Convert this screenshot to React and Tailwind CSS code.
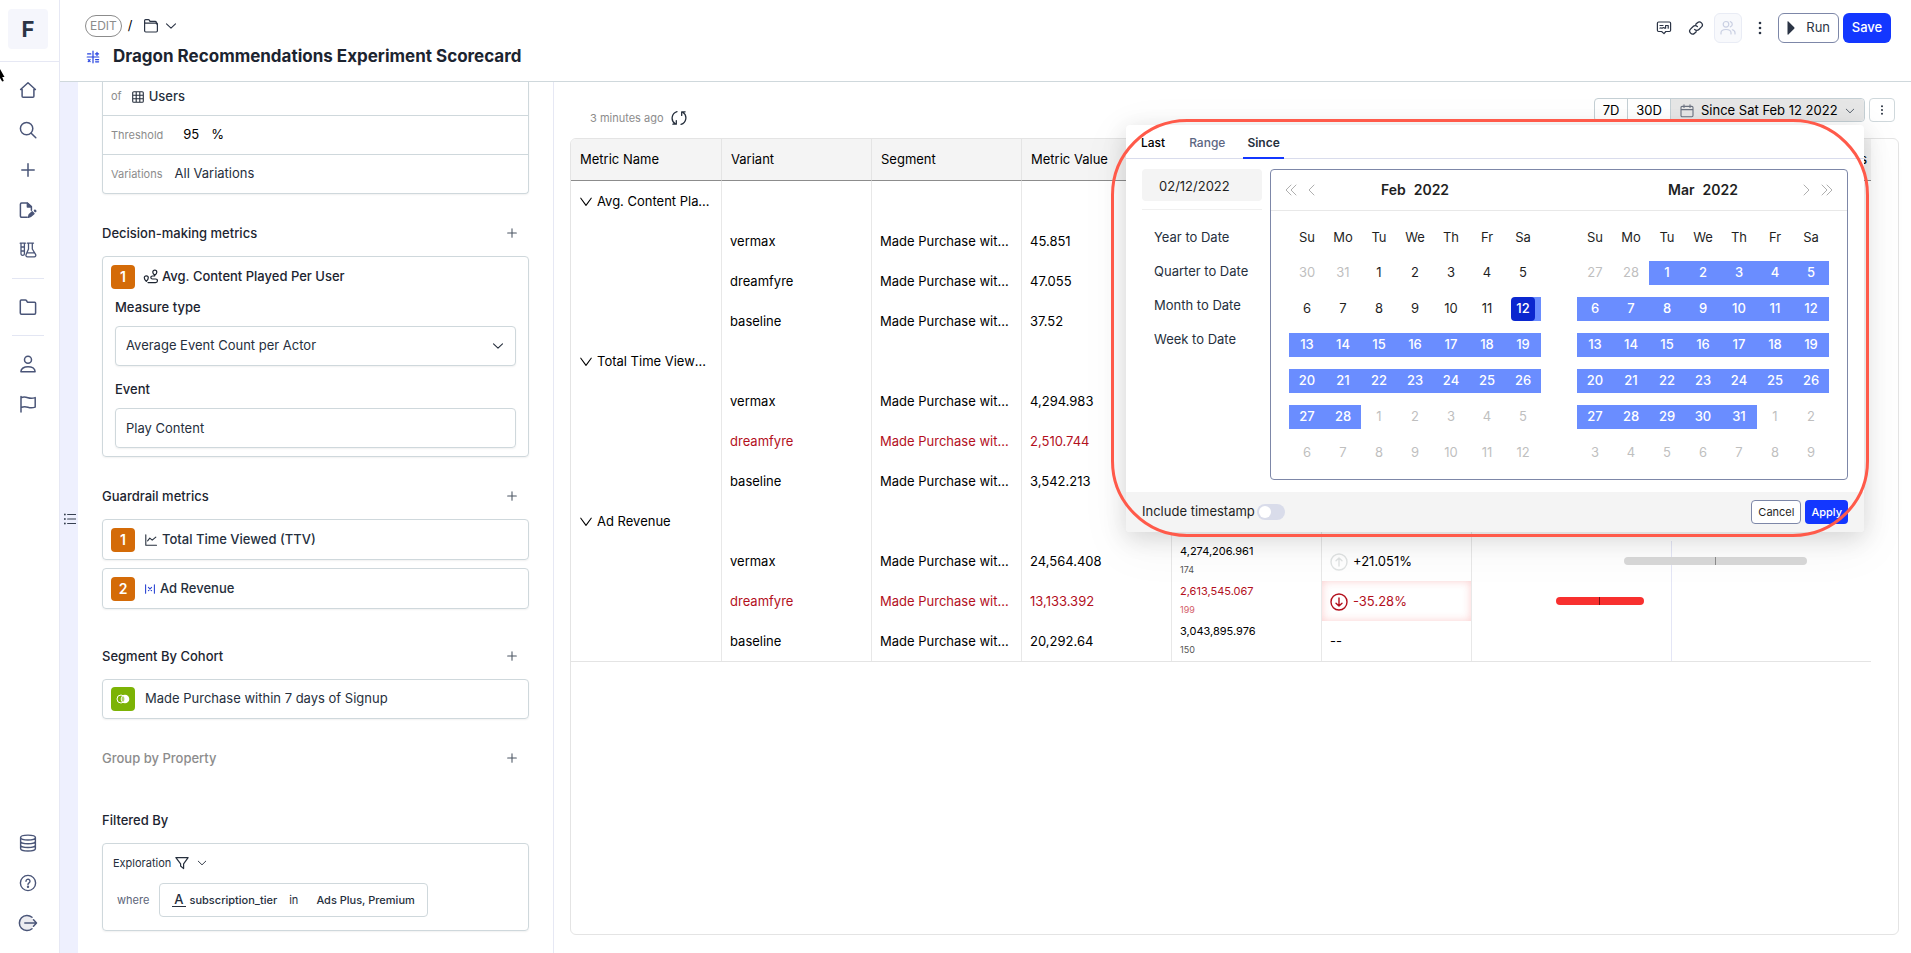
import React from "react";

const cx = (...parts) => parts.filter(Boolean).join(" ");

function Svg({ className, box = 16, width = 1.2, children }) {
  return (
    <svg
      viewBox={`0 0 ${box} ${box}`}
      className={cx("shrink-0", className)}
      fill="none"
      stroke="currentColor"
      strokeWidth={width}
      strokeLinecap="round"
      strokeLinejoin="round"
      aria-hidden="true"
    >
      {children}
    </svg>
  );
}

const HomeIcon = () => (
  <Svg className="size-5" box={20} width={1.5}>
    <path d="M2.600 9.500 10 2.700l7.400 6.800h-1.500v6.800c0 .6-.4 1-1 1H5.100c-.6 0-1-.4-1-1V9.500Z" />
  </Svg>
);
const SearchIcon = () => (
  <Svg className="size-5" box={20} width={1.5}>
    <circle cx="8.600" cy="8.600" r="6.200" />
    <path d="m13.200 13.200 4.600 4.600" />
  </Svg>
);
const PlusIcon = ({ className = "size-5" }) => (
  <Svg className={className} box={20} width={1.5}>
    <path d="M10 3.800v12.400M3.800 10h12.400" />
  </Svg>
);
const EditIcon = () => (
  <Svg className="size-5" box={20} width={1.5}>
    <path d="M9.200 17.200H3.600a1.200 1.200 0 0 1-1.200-1.200V4.200A1.200 1.200 0 0 1 3.600 3h5.800l4 3.600v3.600" />
    <path d="M9.400 3.200V7h3.800Z" fill="currentColor" />
    <path d="m10.400 17.200.9-2.600 3-2.700 1.600 1.700-3 2.700Z" fill="currentColor" />
    <path d="m16.900 10.600.5.500" strokeWidth="2.200" />
  </Svg>
);
const LabIcon = () => (
  <Svg className="size-5" box={20} width={1.300}>
    <path d="M2.200 3.200h5.200M3 3.200v10.500a1.700 1.700 0 0 0 3.400 0V3.200M3 7h3.400M3 11h3.400M9.300 3.200h6.200M10.500 3.200v5.800l-2.500 5.700a1.500 1.500 0 0 0 1.400 2.100h6.900a1.500 1.500 0 0 0 1.400-2.100l-3.400-5.700V3.200M9 12.800h7.600" />
  </Svg>
);
const FolderIcon = ({ className = "size-5" }) => (
  <Svg className={className} box={20} width={1.5}>
    <path d="M2.300 16V4c0-.6.400-1 1-1h4.200c.4 0 .7.200.9.500l1 1.700h7.200c.6 0 1 .4 1 1V16c0 .8-.5 1.200-1.200 1.200H3.500c-.7 0-1.200-.4-1.200-1.200Z" />
  </Svg>
);
const HeaderFolderIcon = () => (
  <Svg className="size-4" width={1.2}>
    <path d="M1.600 5.800V2.600c0-.6.400-1 1-1h2.800c.4 0 .7.200.9.500l.7 1.300h5.400c.6 0 1 .4 1 1v1.400M1.600 5.800c0-.4.300-.7.700-.7h11.400c.4 0 .7.300.7.700v7c0 .8-.5 1.200-1.200 1.200H2.800c-.7 0-1.200-.4-1.200-1.200Z" />
  </Svg>
);
const UserIcon = () => (
  <Svg className="size-5" box={20} width={1.5}>
    <circle cx="10" cy="5.700" r="3.500" />
    <path d="M2.900 17.700c0-3.200 3.200-5 7.100-5s7.100 1.800 7.100 5Z" />
  </Svg>
);
const FlagIcon = () => (
  <Svg className="size-5" box={20} width={1.5}>
    <path d="M3 18V2.500M3 3.800c2.400-1.200 4.600-.8 6.900-.1 2.300.7 4.600.7 7.300-.1v9.500c-2.700.9-5 .8-7.300.1-2.300-.7-4.500-.8-6.900.3" />
  </Svg>
);
const DatabaseIcon = () => (
  <Svg className="size-5" box={20} width={1.4}>
    <path d="M2.600 4.500C2.600 2.900 5 2.100 10 2.100s7.400.8 7.400 2.400S15 7 10 7 2.600 6.100 2.600 4.500ZM2.600 4.500v11c0 1.600 2.400 2.500 7.400 2.500s7.400-.9 7.400-2.500v-11M2.600 8.200c0 1.600 2.400 2.500 7.400 2.500s7.400-.9 7.400-2.500M2.600 12c0 1.600 2.400 2.500 7.400 2.500s7.400-.9 7.400-2.500" />
  </Svg>
);
const HelpIcon = () => (
  <Svg className="size-5" box={20} width={1.4}>
    <circle cx="10" cy="10" r="7.600" />
    <path d="M8 8.200a2 2 0 1 1 3.200 1.600c-.7.5-1.200.8-1.200 1.600" />
    <circle cx="10" cy="13.700" r=".5" fill="currentColor" />
  </Svg>
);
const ExitIcon = () => (
  <Svg className="size-5" box={20} width={1.5}>
    <circle cx="9" cy="10" r="7" fill="#ececf0" stroke="none" />
    <path d="M14 4.300A7.600 7.600 0 1 0 14 15.700M6.800 10h11.400M15.500 6.800l3 3.200-3 3.200" />
  </Svg>
);
const ChevronDown = ({ className = "size-3" }) => (
  <Svg className={className} box={12} width={1.1}>
    <path d="M1.500 3.800 6 8.200l4.500-4.400" />
  </Svg>
);
const ExpandIcon = () => (
  <Svg className="size-3" box={12} width={1.100}>
    <path d="M.8 2.200 6 9.400l5.200-7.200" />
  </Svg>
);
const Dots = ({ className = "size-4" }) => (
  <svg viewBox="0 0 16 16" className={className} fill="currentColor" aria-hidden="true">
    <circle cx="8" cy="3" r="1.300" />
    <circle cx="8" cy="8" r="1.300" />
    <circle cx="8" cy="13" r="1.300" />
  </svg>
);
const ScorecardIcon = () => (
  <Svg className="size-3.5 text-[#2340e0]" box={14} width={1.2}>
    <path d="M7 1.200v11.600M1.200 7h11.600M1.600 3.900h3.200M9.400 3.900h3.200M11 2.300v3.200M2.200 9.700l1.900 1.900M4.100 9.700l-1.900 1.900M9.600 9.700h3M9.600 11.800h3" />
  </Svg>
);
const CommentIcon = () => (
  <Svg className="size-4" width={1.2}>
    <path d="M2.600 2h10.800c.7 0 1.200.5 1.200 1.200v7.100c0 .7-.5 1.200-1.200 1.200H9.800L8 13.600 5.600 11.500h-3c-.7 0-1.200-.5-1.200-1.200V3.200c0-.7.5-1.200 1.200-1.200ZM4 5.500h3M4 8.200c.8-1 1.600.6 2.500-.2S8 7.500 8.600 8.200h1V5.500h2.600v2.700" />
  </Svg>
);
const LinkIcon = () => (
  <Svg className="size-4" width={1.3}>
    <path d="M6.600 9.400a2.900 2.900 0 0 0 4.300.1l2.600-2.600a2.900 2.900 0 0 0-4.100-4.100L7.800 4.300M9.400 6.600a2.900 2.900 0 0 0-4.300-.1L2.500 9.100a2.900 2.900 0 0 0 4.100 4.100l1.600-1.500" />
  </Svg>
);
const UsersIcon = () => (
  <Svg className="size-4" width={1.2}>
    <circle cx="6" cy="4.300" r="2.800" />
    <path d="M1 14v-1.200C1 10.700 3 9.500 6 9.500s5 1.200 5 3.300V14M10.300 1.700a2.700 2.700 0 0 1 0 5.200M12.300 9.800c1.600.5 2.700 1.500 2.700 3V14" />
  </Svg>
);
const TableIcon = () => (
  <Svg className="size-3" box={12} width={1.1}>
    <path d="M1.800.7h8.400c.6 0 1.100.5 1.100 1.100v8.400c0 .6-.5 1.100-1.100 1.100H1.800c-.6 0-1.100-.5-1.100-1.100V1.800C.7 1.200 1.200.7 1.800.7ZM.7 4.200h10.600M.7 7.800h10.600M4.200.7v10.600M7.800.7v10.600" />
  </Svg>
);
const JourneyIcon = () => (
  <Svg className="size-4" width={1.2}>
    <path d="M11.800 1.200a2 2 0 0 1 2 2c0 1.300-2 3-2 3s-2-1.700-2-3a2 2 0 0 1 2-2ZM3.300 6.800a2 2 0 0 1 2 2c0 1.500-2 3.600-2 3.600s-2-2.100-2-3.600a2 2 0 0 1 2-2ZM11.600 7H9.500c-2.200 0-2.200 3 0 3h3c2.600 0 2.600 3.600 0 3.600H5" />
  </Svg>
);
const TrendIcon = () => (
  <Svg className="size-3" box={12} width={1.1}>
    <path d="M.8.8v10.400h10.700M2.600 6.800l2.200-2.600 2.400 2 3.600-3" />
  </Svg>
);
const VariableIcon = () => (
  <Svg className="size-2.5 text-[#2b45d4]" box={10} width={1.1}>
    <path d="M.6.8v8.400M9.400.8v8.400M3.400 3.400l3.200 3.200M6.600 3.400 3.400 6.600" />
  </Svg>
);
const FilterIcon = () => (
  <Svg className="size-3.5" box={14} width={1.2}>
    <path d="M.9 1.600h12.200L8.600 7.800v4.800L5.600 10V7.800Z" />
  </Svg>
);
const RefreshIcon = () => (
  <Svg className="size-4" width={1.300}>
    <path d="M6 1.600A6.800 6.800 0 0 0 4.200 13.800M5.300 10.600v3.600H1.900M10 14.400A6.800 6.800 0 0 0 11.800 2.200M10.700 5.400V1.800h3.400" />
  </Svg>
);
const CalendarIcon = () => (
  <Svg className="size-3.5 text-[#6b7280]" box={14} width={1.1}>
    <path d="M2.200 2.400h9.600c.7 0 1.200.5 1.200 1.200v8c0 .7-.5 1.200-1.200 1.200H2.200c-.7 0-1.200-.5-1.200-1.200v-8c0-.7.5-1.200 1.200-1.200ZM1 5.600h12M4 .8v2.600M10 .8v2.600" />
  </Svg>
);
const ListIcon = () => (
  <Svg className="size-3 text-[#374151]" box={12} width={1.1}>
    <path d="M3.600 1.500h8M3.600 6h8M3.600 10.500h8" />
    <path d="M.8 1.500h.1M.8 6h.1M.8 10.500h.1" strokeWidth="1.800" />
  </Svg>
);
const ArrowCircle = ({ down, className }) => (
  <Svg className={cx("size-[18px]", className)} box={18} width={1.400}>
    <circle cx="9" cy="9" r="8" />
    <path d={down ? "M9 5v8M6 10.200l3 2.900 3-2.900" : "M9 13V5M6 7.800l3-2.900 3 2.900"} />
  </Svg>
);

function Sidebar() {
  const item = "flex size-10 items-center justify-center text-[#4a5578]";
  return (
    <nav className="relative flex w-[60px] shrink-0 flex-col border-r border-[#e6e8f4]" aria-label="Main">
      <div className="flex h-[62px] items-start border-b border-[#e6e8f4] pt-[9px] pl-2">
        <a href="#top" className="flex size-10 items-center justify-center rounded bg-[#f5f6fc] text-[22px] font-bold text-[#2b3445]">
          F
        </a>
      </div>
      <svg className="absolute top-[69px] left-0 h-4 w-[6px]" viewBox="0 0 6 16" aria-hidden="true">
        <path d="M0 0l4.500 8H2.200l1.600 4-1.600.6L0 9Z" fill="#000" />
      </svg>
      <div className="flex flex-1 flex-col pt-2 pl-2">
        <button className={item} aria-label="Home"><HomeIcon /></button>
        <button className={item} aria-label="Search"><SearchIcon /></button>
        <button className={item} aria-label="New"><PlusIcon /></button>
        <button className={item} aria-label="Drafts"><EditIcon /></button>
        <button className={item} aria-label="Experiments"><LabIcon /></button>
        <hr className="my-2 ml-1 w-8 border-[#e3e6f3]" />
        <button className={item} aria-label="Folders"><FolderIcon /></button>
        <hr className="my-2 ml-1 w-8 border-[#e3e6f3]" />
        <button className={item} aria-label="Users"><UserIcon /></button>
        <button className={item} aria-label="Flags"><FlagIcon /></button>
        <div className="mt-auto flex flex-col pb-[10px]">
          <button className={item} aria-label="Data"><DatabaseIcon /></button>
          <button className={item} aria-label="Help"><HelpIcon /></button>
          <button className={item} aria-label="Sign out"><ExitIcon /></button>
        </div>
      </div>
    </nav>
  );
}

function Header() {
  return (
    <header className="flex h-[82px] shrink-0 items-start justify-between border-b border-[#cfd8dc] pr-5 pl-[25px]">
      <div className="pt-[14px]">
        <div className="flex h-6 items-center">
          <span className="flex h-[22px] items-center rounded-full border border-[#8c8c8c] px-1 text-xs text-[#8c8c8c]">EDIT</span>
          <span className="ml-1.5 text-[13px]">/</span>
          <button className="ml-2.5 flex items-center gap-1.5 text-[#2b3445]" aria-label="Choose folder">
            <HeaderFolderIcon />
            <ChevronDown />
          </button>
        </div>
        <div className="mt-[7px] flex h-6 items-center gap-[13px] pl-px">
          <ScorecardIcon />
          <h1 className="text-[17px] font-bold text-[#1c2430]">Dragon Recommendations Experiment Scorecard</h1>
        </div>
      </div>
      <div className="flex items-center gap-1 pt-[13px] text-[13px] text-[#2b3445]">
        <button className="flex size-7 items-center justify-center" aria-label="Comments"><CommentIcon /></button>
        <button className="flex size-7 items-center justify-center" aria-label="Copy link"><LinkIcon /></button>
        <button className="flex h-[30px] w-7 items-center justify-center rounded-md border border-[#e9ecf5] bg-[#f8f9fc] text-[#c9cfe2]" aria-label="Share">
          <UsersIcon />
        </button>
        <button className="flex size-7 items-center justify-center" aria-label="More"><Dots className="size-4" /></button>
        <button className="flex h-[30px] w-[61px] items-center justify-between rounded-md border border-[#7d87a8] px-2">
          <svg viewBox="0 0 8 14" className="h-3.5 w-2" fill="#2b3445" aria-hidden="true">
            <path d="M.5.8C.5.3 1 .2 1.400.5l5.800 5.700c.5.5.5 1.100 0 1.600L1.400 13.500c-.4.3-.9.200-.9-.3Z" />
          </svg>
          Run
        </button>
        <button className="h-[30px] w-12 rounded-md bg-[#1337ff] font-medium text-white">Save</button>
      </div>
    </header>
  );
}

const card = "rounded border border-[#cfd8dc] shadow-[0_1px_2px_rgba(0,0,0,0.06)]";

function SectionHeading({ children, muted, add = true }) {
  return (
    <div className="flex items-center justify-between pt-7 pr-[9px] pb-3">
      <h2 className={cx("text-[13px]/[22px] font-medium", muted ? "text-[#8c8c8c]" : "text-[#1c2430]")}>{children}</h2>
      {add && (
        <button className="flex size-4 items-center justify-center text-[#4b5563]" aria-label="Add">
          <PlusIcon className="size-3.5" />
        </button>
      )}
    </div>
  );
}

const Badge = ({ children }) => (
  <span className="flex size-6 shrink-0 items-center justify-center rounded bg-[#d46b08] text-sm font-semibold text-white">{children}</span>
);

function ConfigPanel() {
  const label = "text-[11px] text-[#8c8c8c]";
  return (
    <section className="w-[476px] shrink-0 overflow-hidden border-r border-[#e6e8f4] pr-6 pl-6 text-[13px] text-[#262f3d]">
      <div className="rounded-b border border-t-0 border-[#cfd8dc] shadow-[0_1px_2px_rgba(0,0,0,0.06)]">
        <div className="flex h-[34px] items-center border-b border-[#cfd8dc] pb-1 pl-2">
          <span className={label}>of</span>
          <span className="ml-2.5 flex items-center gap-[5px] font-medium"><TableIcon /> Users</span>
        </div>
        <div className="flex h-[39px] items-center border-b border-[#cfd8dc] pl-2">
          <label htmlFor="threshold" className={label}>Threshold</label>
          <input id="threshold" defaultValue="95" className="ml-5 w-6 bg-transparent text-black outline-none" />
          <span className="ml-1 text-black">%</span>
        </div>
        <div className="flex h-[38px] items-center pl-2">
          <span className={label}>Variations</span>
          <span className="ml-3">All Variations</span>
        </div>
      </div>

      <SectionHeading>Decision-making metrics</SectionHeading>
      <div className={cx(card, "px-2 pt-2 pb-2")}>
        <div className="flex h-6 items-center">
          <Badge>1</Badge>
          <span className="ml-2 flex items-center gap-[3px] font-medium text-[#1c2430]"><JourneyIcon /> Avg. Content Played Per User</span>
        </div>
        <div className="px-1">
          <label htmlFor="measure" className="mt-[7px] block h-[22px] text-[13px]/[22px] font-medium text-[#1c2430]">Measure type</label>
          <div className="relative mt-2">
            <select id="measure" className={cx(card, "h-10 w-full appearance-none bg-white px-2.5 outline-none")}>
              <option>Average Event Count per Actor</option>
            </select>
            <span className="pointer-events-none absolute top-3.5 right-3"><ChevronDown /></span>
          </div>
          <label htmlFor="event" className="mt-3 block h-[22px] text-[13px]/[22px] font-medium text-[#1c2430]">Event</label>
          <input id="event" defaultValue="Play Content" className={cx(card, "mt-2 block h-10 w-full px-2.5 outline-none")} />
        </div>
      </div>

      <SectionHeading>Guardrail metrics</SectionHeading>
      <div className="flex flex-col gap-2 pb-2">
        <div className={cx(card, "flex h-[41px] items-center px-2")}>
          <Badge>1</Badge>
          <span className="ml-2.5 flex items-center gap-[5px] font-medium"><TrendIcon /> Total Time Viewed (TTV)</span>
        </div>
        <div className={cx(card, "flex h-[41px] items-center px-2")}>
          <Badge>2</Badge>
          <span className="ml-2.5 flex items-center gap-[5px] font-medium"><VariableIcon /> Ad Revenue</span>
        </div>
      </div>

      <SectionHeading>Segment By Cohort</SectionHeading>
      <div className={cx(card, "flex h-10 items-center px-2")}>
        <span className="flex size-6 items-center justify-center rounded bg-[#7cb305]">
          <svg viewBox="0 0 14 10" className="h-2.5 w-3.5" aria-hidden="true">
            <circle cx="9" cy="5" r="4.300" fill="#fff" />
            <circle cx="5" cy="5" r="4" fill="none" stroke="#fff" strokeWidth="1" />
            <path d="M7 2a3.800 3.800 0 0 1 0 6 3.800 3.800 0 0 1 0-6Z" fill="#7cb305" opacity=".6" />
          </svg>
        </span>
        <span className="ml-2.5">Made Purchase within 7 days of Signup</span>
      </div>

      <SectionHeading muted>Group by Property</SectionHeading>
      <SectionHeading add={false}>Filtered By</SectionHeading>
      <div className={cx(card, "h-[88px] px-2.5 pt-2 text-[11px]")}>
        <button className="flex h-[22px] items-center">
          Exploration
          <span className="mr-2 ml-1"><FilterIcon /></span>
          <ChevronDown className="size-2.5" />
        </button>
        <div className="mt-[9px] flex items-center pl-1">
          <span className="text-[#5c6478]">where</span>
          <button className="ml-2.5 flex h-[34px] items-center rounded border border-[#cfd8dc] px-3 font-medium">
            <span className="border-b border-current px-0.5 text-[13px]/[13px]">A</span>
            <span className="ml-1">subscription_tier</span>
            <span className="mr-[18px] ml-3 font-normal">in</span>
            Ads Plus, Premium
          </button>
        </div>
      </div>
    </section>
  );
}

const SEGMENT = "Made Purchase within 7 days of Signup";
const groups = [
  {
    name: "Avg. Content Played Per User",
    rows: [
      { variant: "vermax", value: "45.851" },
      { variant: "dreamfyre", value: "47.055" },
      { variant: "baseline", value: "37.52" },
    ],
  },
  {
    name: "Total Time Viewed (TTV)",
    rows: [
      { variant: "vermax", value: "4,294.983" },
      { variant: "dreamfyre", value: "2,510.744", bad: true },
      { variant: "baseline", value: "3,542.213" },
    ],
  },
  {
    name: "Ad Revenue",
    rows: [
      { variant: "vermax", value: "24,564.408", total: "4,274,206.961", count: "174", lift: "+21.051%", bar: [38, 46] },
      { variant: "dreamfyre", value: "13,133.392", total: "2,613,545.067", count: "199", lift: "-35.28%", bar: [21, 22], bad: true },
      { variant: "baseline", value: "20,292.64", total: "3,043,895.976", count: "150", lift: "--" },
    ],
  },
];

function ResultsTable() {
  const th = "truncate border-r border-b border-r-[#e4e4e4] border-b-[#8c8c8c] px-[9px] text-left font-normal";
  const td = "truncate border-r border-[#e8e8e8] px-2 pt-px pb-0";
  return (
    <table className="w-[1300px] table-fixed border-separate border-spacing-0 border-b border-[#e4e4e4] text-[13px]">
      <colgroup>
        <col className="w-[151px]" />
        <col className="w-[150px]" />
        <col className="w-[150px]" />
        <col className="w-[150px]" />
        <col className="w-[150px]" />
        <col className="w-[150px]" />
        <col className="w-[399px]" />
      </colgroup>
      <thead>
        <tr className="h-[42px] bg-[#f4f4f4]">
          <th className={th}>Metric Name</th>
          <th className={th}>Variant</th>
          <th className={th}>Segment</th>
          <th className={th}>Metric Value</th>
          <th className={th}></th>
          <th className={th}></th>
          <th className="border-b border-[#8c8c8c] pr-1 text-right font-normal">Bounds</th>
        </tr>
      </thead>
      <tbody>
        {groups.map((g) => (
          <React.Fragment key={g.name}>
            <tr className="h-10">
              <td className={td}>
                <div className="flex items-center gap-[5px] pl-px">
                  <ExpandIcon />
                  <span className="truncate">{g.name}</span>
                </div>
              </td>
              <td className={td}></td>
              <td className={td}></td>
              <td className={td}></td>
              <td className={td}></td>
              <td className={td}></td>
              <td className="p-0"></td>
            </tr>
            {g.rows.map((r) => (
              <tr key={r.variant} className={cx("h-10", r.bad && "text-[#b3101d]")}>
                <td className={td}></td>
                <td className={td}>{r.variant}</td>
                <td className={td}>{SEGMENT}</td>
                <td className={td}>{r.value}</td>
                <td className="border-r border-[#e8e8e8] px-2 py-0">
                  {r.total && (
                    <>
                      <div className="text-[11px]/[18px]">{r.total}</div>
                      <div className={cx("text-[9px]/5", r.bad ? "text-[#d4606a]" : "text-[#555]")}>{r.count}</div>
                    </>
                  )}
                </td>
                <td className={cx(td, r.lift && r.bad && "shadow-[inset_0_0_8px_rgba(245,60,60,0.25)]")}>
                  {r.lift && (
                    <span className="flex items-center gap-[5px]">
                      {r.bar && <ArrowCircle down={r.bad} className={r.bad ? "" : "text-[#e0e3e3]"} />}
                      {r.lift}
                    </span>
                  )}
                </td>
                <td className="bg-[linear-gradient(#e4e6f6,#e4e6f6)] bg-[length:1px_100%] bg-center bg-no-repeat p-0">
                  {r.bar && (
                    <div
                      className={cx("flex h-2 justify-center rounded-full", r.bad ? "bg-[#f8302f]" : "bg-[#d9d9d9]")}
                      style={{ marginLeft: `${r.bar[0]}%`, width: `${r.bar[1]}%` }}
                    >
                      <span className={cx("h-full w-px", r.bad ? "bg-[#7a1010]" : "bg-[#8c8c8c]")} />
                    </div>
                  )}
                </td>
              </tr>
            ))}
          </React.Fragment>
        ))}
      </tbody>
    </table>
  );
}

const range = (from, to, kind) => Array.from({ length: to - from + 1 }, (_, i) => ({ day: from + i, kind }));
const february = [...range(30, 31, "out"), ...range(1, 11, "in"), { day: 12, kind: "start" }, ...range(13, 28, "range"), ...range(1, 12, "out")];
const march = [...range(27, 28, "out"), ...range(1, 31, "range"), ...range(1, 9, "out")];

const dayWrap = {
  out: "text-[#bfbfbf]",
  in: "text-[#1f1f1f]",
  range: "bg-[#6a8dff] font-medium text-white",
  start: "bg-[linear-gradient(to_right,transparent_50%,#6a8dff_50%)] font-medium text-white",
};

function Month({ month, days, prev }) {
  const weeks = Array.from({ length: 6 }, (_, i) => days.slice(i * 7, i * 7 + 7));
  const nav = "flex gap-2 text-[#a6a6a6]";
  return (
    <div className="flex-1">
      <div className="grid h-[41px] grid-cols-[1fr_auto_1fr] items-center border-b border-[#e8e8e8] px-3.5">
        <div className={nav}>
          {prev && (
            <>
              <button aria-label="Previous year"><Svg className="size-3" box={12} width={0.900}><path d="M6 1 1 6l5 5M11 1 6 6l5 5" /></Svg></button>
              <button aria-label="Previous month"><Svg className="size-3" box={12} width={0.900}><path d="M9 1 4 6l5 5" /></Svg></button>
            </>
          )}
        </div>
        <div className="flex gap-2 text-sm font-semibold text-[#1f1f1f]">
          <button>{month}</button>
          <button>2022</button>
        </div>
        <div className={cx(nav, "justify-end")}>
          {!prev && (
            <>
              <button aria-label="Next month"><Svg className="size-3" box={12} width={0.900}><path d="m3 1 5 5-5 5" /></Svg></button>
              <button aria-label="Next year"><Svg className="size-3" box={12} width={0.900}><path d="m1 1 5 5-5 5M6 1l5 5-5 5" /></Svg></button>
            </>
          )}
        </div>
      </div>
      <table className="mx-auto my-2 w-[252px] table-fixed text-center text-[13px]">
        <thead>
          <tr className="h-9">
            {["Su", "Mo", "Tu", "We", "Th", "Fr", "Sa"].map((d) => (
              <th key={d} className="p-0 pt-px font-normal text-[#1f1f1f]">{d}</th>
            ))}
          </tr>
        </thead>
        <tbody>
          {weeks.map((week, i) => (
            <tr key={i} className="h-9">
              {week.map((d) => (
                <td key={d.day} className="p-0">
                  <div className={cx("flex h-6 justify-center", dayWrap[d.kind])}>
                    <button className={cx("size-6", d.kind === "start" && "rounded bg-[#0b27cf]")}>{d.day}</button>
                  </div>
                </td>
              ))}
            </tr>
          ))}
        </tbody>
      </table>
    </div>
  );
}

function DatePopover() {
  return (
    <div className="absolute top-[26px] right-0 z-10 w-[738px] text-[13px]" role="dialog" aria-label="Date range">
      <div className="overflow-hidden rounded bg-white shadow-[0_6px_24px_rgba(0,0,0,0.14),0_12px_48px_8px_rgba(0,0,0,0.04)]">
        <div className="flex h-[34px] border-b border-[#d9dcec] pl-[15px] text-xs font-medium" role="tablist">
          <button role="tab" className="h-[34px] pt-0.5 text-black">Last</button>
          <button role="tab" className="ml-6 h-[34px] pt-0.5 text-[#5c6682]">Range</button>
          <button role="tab" aria-selected="true" className="ml-[18px] h-[34px] border-b-2 border-[#1337ff] px-1 pt-1 font-semibold text-[#262f3d]">Since</button>
        </div>
        <div className="flex gap-2 px-4 pt-2.5 pb-3">
          <div className="w-[120px] text-[#262f3d]">
            <input aria-label="Start date" defaultValue="02/12/2022" className="h-8 w-full rounded bg-[#f4f4f4] px-[17px] pt-0.5 text-[#1f1f1f] outline-none" />
            <div className="mt-2 flex flex-col border-t border-[#f0f0f0] pt-[11px]">
              {["Year to Date", "Quarter to Date", "Month to Date", "Week to Date"].map((t) => (
                <button key={t} className="h-[34px] pl-3 text-left whitespace-nowrap">{t}</button>
              ))}
            </div>
          </div>
          <div className="flex flex-1 rounded border border-[#7d87a8]">
            <Month month="Feb" days={february} prev />
            <Month month="Mar" days={march} />
          </div>
        </div>
        <div className="flex h-10 items-center bg-[#f4f4f4] px-4 text-[#1f1f1f]">
          <label htmlFor="timestamp">Include timestamp</label>
          <input
            id="timestamp"
            type="checkbox"
            role="switch"
            className="ml-0.5 flex h-4 w-7 appearance-none items-center rounded-full bg-[#d9dcea] pl-0.5 before:size-3 before:rounded-full before:bg-white"
          />
          <div className="ml-auto flex gap-1 text-[11px]">
            <button className="h-6 rounded border border-[#7d87a8] bg-white px-1.5">Cancel</button>
            <button className="h-6 rounded bg-[#1337ff] px-1.5 font-medium text-white">Apply</button>
          </div>
        </div>
      </div>
      <div className="pointer-events-none absolute -top-1.5 -right-[5px] -bottom-[5px] -left-[15px] rounded-[76px] border-3 border-[#ff5a4a]" />
    </div>
  );
}

function Results() {
  return (
    <main className="flex min-w-0 flex-1 flex-col pt-4 pr-3 pb-[18px] pl-4 text-black">
      <div className="flex h-10 items-start justify-between pr-1 pl-5">
        <div className="flex h-10 items-center gap-[7px] text-[11px] text-[#8c8c8c]">
          3 minutes ago
          <button className="text-[#262f3d]" aria-label="Refresh"><RefreshIcon /></button>
        </div>
        <div className="flex gap-1 text-[13px]">
          <div className="relative flex h-6 rounded border border-[#c4cfd4]">
            <button className="w-[33px] border-r border-[#c4cfd4] pt-px">7D</button>
            <button className="w-[43px] border-r border-[#c4cfd4] pt-px">30D</button>
            <button className="flex w-[193px] items-center rounded-r bg-[#e6e6e6] px-[9px] pt-px">
              <CalendarIcon />
              <span className="mr-auto ml-[7px]">Since Sat Feb 12 2022</span>
              <ChevronDown className="size-2.5 text-[#4b5563]" />
            </button>
            <DatePopover />
          </div>
          <button className="flex h-6 w-[26px] items-center justify-center rounded border border-[#cfd8dc] text-[#262f3d]" aria-label="More options">
            <Dots className="size-3" />
          </button>
        </div>
      </div>
      <div className="flex-1 overflow-hidden rounded-md border border-[#e4e4e4]">
        <ResultsTable />
      </div>
    </main>
  );
}

export default function App() {
  return (
    <div className="flex h-screen overflow-hidden bg-white font-['Inter',sans-serif]">
      <Sidebar />
      <div className="flex min-w-0 flex-1 flex-col">
        <Header />
        <div className="flex min-h-0 flex-1">
          <div className="flex w-[18px] shrink-0 items-start justify-end bg-[#eef0fe] pt-[431px] pr-0.5">
            <button aria-label="Toggle panel"><ListIcon /></button>
          </div>
          <ConfigPanel />
          <Results />
        </div>
      </div>
    </div>
  );
}
